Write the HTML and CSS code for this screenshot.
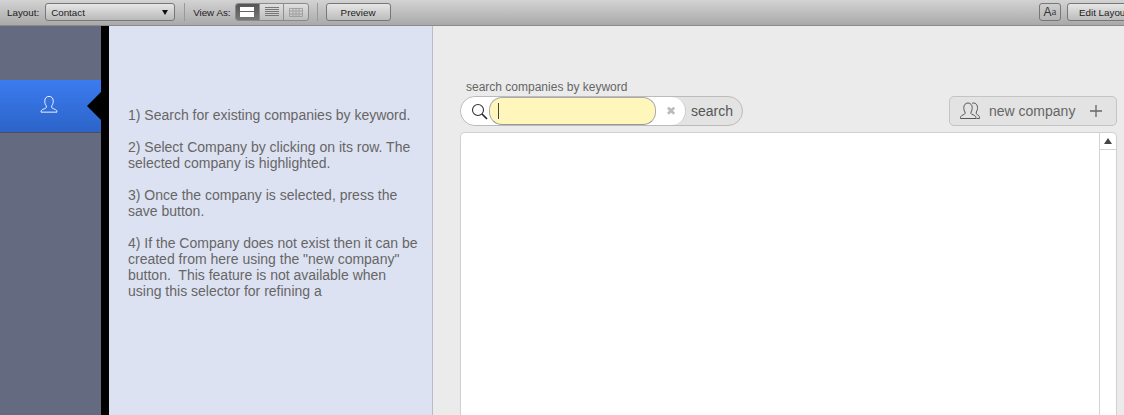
FILE: index.html
```html
<!DOCTYPE html>
<html lang="en">
<head>
<meta charset="utf-8">
<title>Company selector</title>
<link rel="stylesheet" href="styles.css">
</head>
<body>
<header class="toolbar">
  <span class="tb-label">Layout:</span>
  <div class="select"><span>Contact</span><i class="select-arrow"></i></div>
  <div class="tb-sep"></div>
  <span class="tb-label">View As:</span>
  <div class="seg">
    <div class="seg-item active"><svg width="14" height="10" viewBox="0 0 14 10"><rect width="14" height="4" fill="#fff"/><rect y="5" width="14" height="5" fill="#fff"/></svg></div>
    <div class="seg-item"><svg width="14" height="10" viewBox="0 0 14 10"><path d="M0 .5h14M0 2.500h14M0 4.500h14M0 6.500h14M0 8.500h14" stroke="#777" stroke-width="1"/></svg></div>
    <div class="seg-item last"><svg width="14" height="9" viewBox="0 0 14 9" fill="none"><path d="M.5.5h13v8H.5zM.5 3h13M.5 6h13M4 .5v8M7 .5v8M10 .5v8" stroke="#999"/></svg></div>
  </div>
  <div class="tb-sep"></div>
  <div class="tb-btn preview">Preview</div>
  <div class="tb-spacer"></div>
  <div class="tb-btn aa"><span class="aa-big">A</span><span class="aa-small">a</span></div>
  <div class="tb-btn edit">Edit Layout</div>
</header>
<main class="app">
  <nav class="rail">
    <div class="rail-item">
      <svg width="18" height="19" viewBox="0 0 20 20" fill="none"><path d="M7 11.500C5.600 10 5.300 8 5.300 6 5.300 3 7.200 1 10 1s4.700 2 4.700 5c0 2-.3 4-1.700 5.500v2c0 1 4.500 1.500 5.500 3.200.3.600.4 1.300.4 1.800H1.100c0-.5.1-1.200.4-1.800C2.500 15 7 14.500 7 13.500z" stroke="#fff" stroke-width="1"/></svg>
      <i class="rail-pointer"></i>
    </div>
  </nav>
  <div class="rail-edge"></div>
  <aside class="help">
    <p>1) Search for existing companies by keyword.</p>
    <p>2) Select Company by clicking on its row. The selected company is highlighted.</p>
    <p>3) Once the company is selected, press the save button.</p>
    <p>4) If the Company does not exist then it can be created from here using the "new company" button.&nbsp; This feature is not available when using this selector for refining a</p>
  </aside>
  <section class="content">
    <div class="search-label">search companies by keyword</div>
    <div class="controls">
      <div class="search">
        <div class="search-main">
          <svg class="lens" width="17" height="17" viewBox="0 0 17 17" fill="none"><circle cx="7" cy="7" r="5.500" stroke="#333" stroke-width="1.100"/><path d="M11 11l5 5" stroke="#222" stroke-width="1.600"/></svg>
          <div class="field"><i class="caret"></i></div>
          <span class="clear">✖</span>
        </div>
        <span class="search-btn">search</span>
      </div>
      <div class="new-btn">
        <svg width="20" height="18" viewBox="0 0 20 18" fill="none" stroke="#555" stroke-width="1"><path d="M5 10C4 8.500 3.800 7 3.800 5.500 3.800 3 5.500 1 8 1s4.200 2 4.200 4.500c0 1.500-.2 3-1.200 4.500v1.500c0 1 4 1.500 4.700 3 .2.500.3 1.200.3 2H.5c0-.8.1-1.500.3-2C1.500 13 5 12.500 5 11.500z"/><path d="M12 1.400c.5-.3 1-.4 1.500-.4 2.500 0 4 2 4 4.500 0 1.500-.2 3-1.200 4.500v1.500c0 1 2.500 1.500 3 3 .2.500.2 1.200.2 2h-3"/></svg>
        <span class="new-text">new company</span>
        <svg width="12" height="12" viewBox="0 0 12 12"><path d="M6 0v12M0 6h12" stroke="#666" stroke-width="1.300"/></svg>
      </div>
    </div>
    <div class="results">
      <div class="scrollbar"><div class="scroll-up"><i class="up-arrow"></i></div></div>
    </div>
  </section>
</main>
</body>
</html>
```
FILE: styles.css
```css
* { box-sizing: border-box; }
html, body { margin: 0; height: 100%; overflow: hidden; }
body { width: 1124px; height: 415px; font-family: "Liberation Sans", Arial, sans-serif; color: #666; background: #ebebeb; display: flex; flex-direction: column; }

.toolbar { height: 26px; flex: none; display: flex; align-items: center; padding: 0 0 1px 7px; background: linear-gradient(#d3d3d3, #a9a9a9); border-bottom: 1px solid #8a8a8a; font-size: 9.800px; color: #1c1c1c; white-space: nowrap; overflow: hidden; }
.select { width: 130px; height: 18px; margin: 0 1px 0 6px; padding: 0 5px; display: flex; align-items: center; justify-content: space-between; border: 1px solid #777; border-radius: 3px; background: linear-gradient(#e6e6e6, #b9b9b9); }
.select-arrow { width: 0; height: 0; border: 3px solid transparent; border-top: 5px solid #111; border-bottom: 0; margin-right: 1px; }
.tb-sep { width: 1px; height: 18px; background: #999; margin: 0 8px; }
.seg { display: flex; width: 74px; height: 18px; margin-left: 4px; border: 1px solid #8a8a8a; border-radius: 3px; overflow: hidden; background: linear-gradient(#e0e0e0, #bdbdbd); }
.seg-item { flex: 1; display: flex; align-items: center; justify-content: center; border-right: 1px solid #8f8f8f; }
.seg-item.last { border-right: 0; opacity: .85; }
.seg-item.active { background: linear-gradient(#555, #777); }
.tb-btn { height: 18px; display: flex; align-items: center; justify-content: center; border: 1px solid #777; border-radius: 3px; background: linear-gradient(#e6e6e6, #bcbcbc); }
.preview { width: 65px; }
.tb-spacer { flex: 1; }
.aa { width: 22px; margin-right: 6px; background: linear-gradient(#cfcfcf, #b5b5b5); color: #333; }
.aa-big { font-size: 12px; }
.aa-small { font-family: "Liberation Serif", serif; font-size: 11px; margin-bottom: 2px; color: #444; }
.edit { width: 66px; flex: none; margin-right: -9px; justify-content: flex-start; padding-left: 11px; }

.app { flex: 1; display: flex; min-height: 0; }
.rail { width: 101px; flex: none; padding-top: 54px; background: #646a80; }
.rail-item { height: 53px; display: flex; align-items: center; justify-content: center; padding: 0 4px 4px 0; position: relative; background: linear-gradient(#3b7bf0, #2c64c8); border-bottom: 1px solid #4a5062; }
.rail-pointer { position: absolute; right: 0; top: 12px; border: 14px solid transparent; border-right: 14px solid #000; border-left: 0; }
.rail-edge { width: 8px; flex: none; background: #000; }
.help { width: 324px; flex: none; padding: 81px 10px 0 19px; background: #dde2f2; border-right: 1px solid #b9bcc6; font-size: 14px; line-height: 16px; color: #666; }
.help p { margin: 0 0 16px; }

.content { flex: 1; min-width: 0; padding: 54px 7px 0 27px; display: flex; flex-direction: column; }
.search-label { font-size: 12px; line-height: 14px; margin-left: 6px; color: #666; }
.controls { display: flex; justify-content: space-between; align-items: flex-start; margin-top: 2px; }
.search { width: 283px; height: 30px; display: flex; align-items: stretch; border: 1px solid #bbb; border-radius: 15px; background: #e3e3e3; overflow: hidden; }
.search-main { width: 225px; flex: none; display: flex; align-items: center; background: #fff; border-right: 1px solid #ccc; border-radius: 14px; }
.lens { margin-left: 10px; flex: none; }
.field { width: 167px; height: 28px; flex: none; margin-left: 1px; display: flex; align-items: center; padding-left: 8px; background: #fff6bb; border: 1px solid #aaa; border-bottom-color: #999; border-radius: 13px; }
.caret { width: 1px; height: 16px; background: #444; }
.clear { flex: 1; text-align: center; font-size: 12px; color: #bbb; }
.search-btn { flex: 1; display: flex; align-items: center; padding-left: 5px; font-size: 14px; color: #555; }
.new-btn { width: 168px; height: 30px; display: flex; align-items: center; padding: 0 14px 0 10px; background: #e3e3e3; border: 1px solid #c4c4c4; border-radius: 5px; font-size: 14px; color: #666; }
.new-text { flex: 1; margin-left: 9px; }
.results { flex: 1; margin-top: 6px; display: flex; justify-content: flex-end; background: #fff; border: 1px solid #d0d0d0; border-bottom: 0; border-radius: 5px 5px 0 0; }
.scrollbar { width: 17px; border-left: 1px solid #d4d4d4; }
.scroll-up { height: 17px; display: flex; align-items: center; justify-content: center; border-bottom: 1px solid #d4d4d4; }
.up-arrow { width: 0; height: 0; border: 4px solid transparent; border-bottom: 6px solid #444; border-top: 0; }
```
